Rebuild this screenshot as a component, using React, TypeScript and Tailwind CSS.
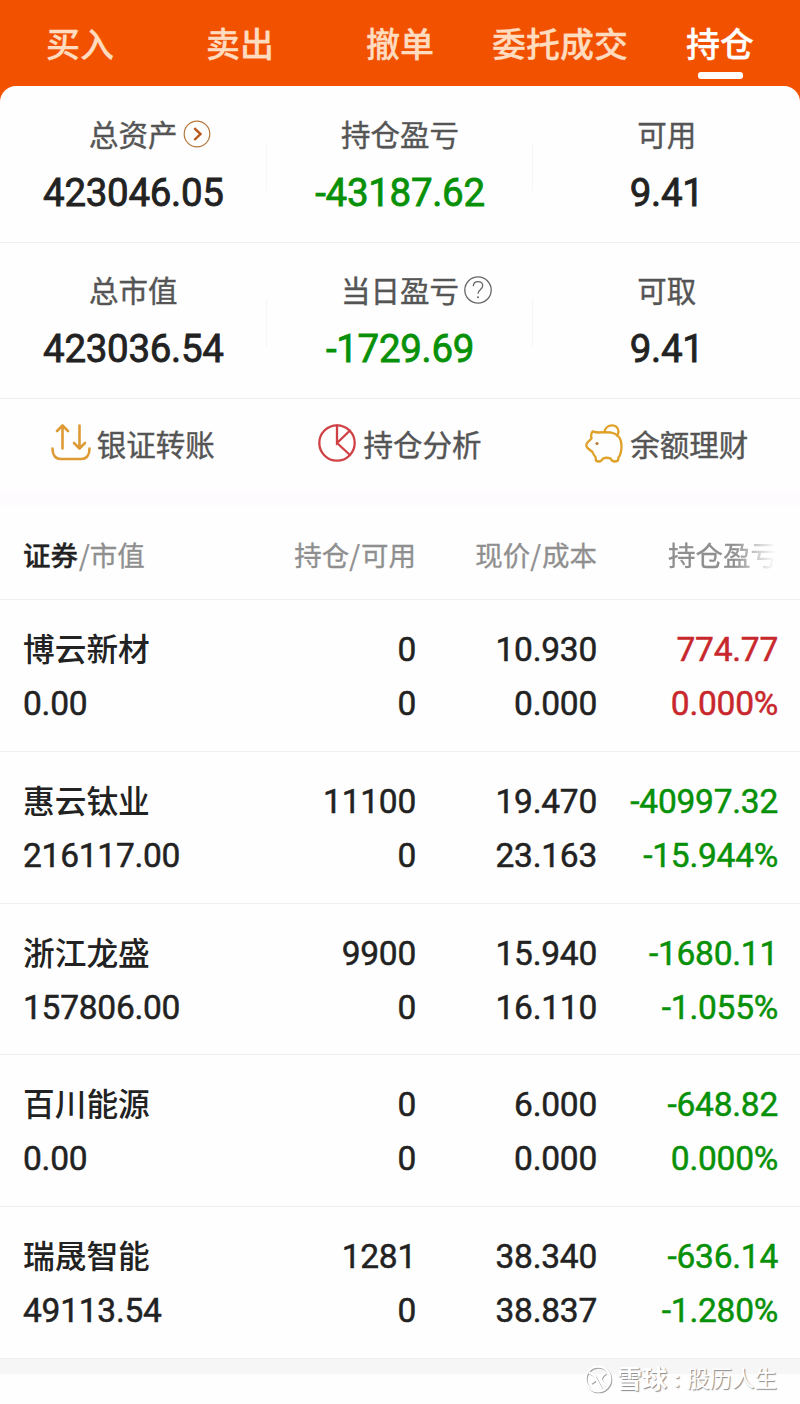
import React from 'react';
import clsx from 'clsx';

const tabs = [
  { label: '买入' },
  { label: '卖出' },
  { label: '撤单' },
  { label: '委托成交' },
  { label: '持仓', active: true },
];

const summary = [
  [
    { label: '总资产', value: '423046.05', icon: 'arrow' },
    { label: '持仓盈亏', value: '-43187.62', down: true },
    { label: '可用', value: '9.41' },
  ],
  [
    { label: '总市值', value: '423036.54' },
    { label: '当日盈亏', value: '-1729.69', down: true, icon: 'help' },
    { label: '可取', value: '9.41' },
  ],
];

const holdings = [
  { name: '博云新材', market: '0.00', held: '0', usable: '0', price: '10.930', cost: '0.000', profit: '774.77', rate: '0.000%', up: true },
  { name: '惠云钛业', market: '216117.00', held: '11100', usable: '0', price: '19.470', cost: '23.163', profit: '-40997.32', rate: '-15.944%' },
  { name: '浙江龙盛', market: '157806.00', held: '9900', usable: '0', price: '15.940', cost: '16.110', profit: '-1680.11', rate: '-1.055%' },
  { name: '百川能源', market: '0.00', held: '0', usable: '0', price: '6.000', cost: '0.000', profit: '-648.82', rate: '0.000%' },
  { name: '瑞晟智能', market: '49113.54', held: '1281', usable: '0', price: '38.340', cost: '38.837', profit: '-636.14', rate: '-1.280%' },
];

const ArrowIcon = () => (
  <svg width="28" height="28" viewBox="0 0 28 28" fill="none">
    <circle cx="14" cy="14" r="12.8" stroke="#b5793f" strokeWidth="1.2" />
    <path d="M11.3 8.2 17.5 14l-6.2 6" stroke="#b9561c" strokeWidth="2.4" />
  </svg>
);

const HelpIcon = () => (
  <svg width="28" height="28" viewBox="0 0 28 28" fill="none" stroke="#666" strokeWidth="1.3">
    <circle cx="14" cy="14" r="13.2" />
    <path d="M9.3 10.3c.1-2.9 2-4.6 4.7-4.6 2.8 0 4.7 1.7 4.7 4.1 0 3.6-4.7 3.8-4.7 8" />
    <circle cx="14" cy="21.2" r="1" fill="#666" stroke="none" />
  </svg>
);

const TransferIcon = () => (
  <svg width="40" height="40" viewBox="0 0 40 40" fill="none" stroke="#dd9a35" strokeWidth="2.6" strokeLinecap="round" strokeLinejoin="round">
    <path d="M11.500 25.500V2.500M6 8 11.500 2.500 17 8" />
    <path d="M28.500 2.500V25.500M23 20 28.500 25.500 34 20" />
    <path d="M1.500 25.500C1.500 32 4.500 36 9.500 36H30.500C35.500 36 38.500 32 38.500 25.500" />
  </svg>
);

const PieIcon = () => (
  <svg width="40" height="40" viewBox="0 0 40 40" fill="none" stroke="#d04145" strokeWidth="2.3" strokeLinecap="round">
    <circle cx="20" cy="20" r="17.700" />
    <path d="M20 2.500V20L33 7.500M20 20 33 32" />
  </svg>
);

const PiggyIcon = () => (
  <svg width="40" height="40" viewBox="0 0 40 40" fill="none" stroke="#dfa127" strokeWidth="2.300" strokeLinecap="round" strokeLinejoin="round">
    <path d="M8.500 8.500 13.500 9.500Q19 9 27 9.500C34 11 37.500 16 37.500 23 37.500 29 36.500 32 34.500 34.500L34 37.500Q30.500 39.500 28 37.500L26.500 35.500Q22.500 34 19 35.500L17.500 37.500Q14.500 39.500 12 37.500L11.500 34Q9.500 32 8.500 29L3.500 25Q1.500 22.500 3 20L7.500 15.500Q6.500 11 8.500 8.500Z" />
    <path d="M20.500 9C21.500 .500 34.500 0 34.500 8.500Q34.500 11 33 12.500" />
    <circle cx="13" cy="20.500" r="1.600" fill="#bb7b35" stroke="none" />
  </svg>
);

const SnowballLogo = () => (
  <svg className="mr-[3px]" width="30" height="30" viewBox="0 0 30 30" fill="none">
    <g stroke="#a0a0a0" strokeWidth="2.2" transform="translate(.9 .9)">
      <circle cx="14" cy="14" r="12.3" />
      <path d="M5 7.500Q11 10 12 14 10 16 7 18M21.500 8Q18 10 16.500 14 18 18 23 21M12 14 18 25" />
    </g>
    <g stroke="#fff" strokeWidth="2.2">
      <circle cx="14" cy="14" r="12.3" />
      <path d="M5 7.500Q11 10 12 14 10 16 7 18M21.500 8Q18 10 16.500 14 18 18 23 21M12 14 18 25" />
    </g>
  </svg>
);

const actions = [
  { label: '银证转账', icon: <TransferIcon /> },
  { label: '持仓分析', icon: <PieIcon /> },
  { label: '余额理财', icon: <PiggyIcon /> },
];

const App = () => {
  return (
    <div className="w-[800px] h-[1404px] overflow-hidden bg-[#fefefe] font-['Roboto','Noto_Sans_CJK_SC',sans-serif] text-[#222]">
      {/* Trade tabs */}
      <div className="bg-[#f25200]">
        <div className="grid h-[86px] grid-cols-5">
          {tabs.map((tab) => (
            <div key={tab.label} className="flex flex-col items-center pt-[22px]">
              <span
                className={clsx(
                  'text-[34px] leading-[46px] font-medium whitespace-nowrap [-webkit-text-stroke:0.3px]',
                  tab.active ? 'text-white' : 'text-[#ffdcc0]'
                )}
              >
                {tab.label}
              </span>
              {tab.active && <span className="mt-1 h-[7px] w-[45px] rounded-[3px] bg-white" />}
            </div>
          ))}
        </div>
        <div className="h-4 rounded-t-2xl bg-[#fefefe]" />
      </div>

      {/* Account summary */}
      <div className="-mt-4">
        {summary.map((row, index) => (
          <div key={index} className={clsx('grid grid-cols-3 border-b border-[#efefef]', index === 0 ? 'h-[157px] pt-[29px]' : 'h-[156px] pt-7')}>
            {row.map((item, col) => (
              <div key={item.label} className="relative flex flex-col items-center">
                <div className="relative text-[29.5px] leading-[42px] text-[#555] whitespace-nowrap [-webkit-text-stroke:0.4px]">
                  {item.label}
                  {item.icon && (
                    <span className="absolute left-full top-[5px] ml-[5px]">
                      {item.icon === 'arrow' ? <ArrowIcon /> : <HelpIcon />}
                    </span>
                  )}
                </div>
                <div
                  className={clsx(
                    'mt-3 text-[38.5px] leading-[48px] tracking-[-0.3px] [-webkit-text-stroke:0.8px]',
                    item.down && 'text-[#089108]'
                  )}
                >
                  {item.value}
                </div>
                {col < 2 && <span className="absolute right-0 top-7 h-12 w-px bg-[#f6f6f6]" />}
              </div>
            ))}
          </div>
        ))}
      </div>

      {/* Shortcuts */}
      <div className="grid h-[93px] grid-cols-3">
        {actions.map((action) => (
          <div key={action.label} className="flex h-[88px] items-center justify-center gap-[6px] pr-[1px]">
            {action.icon}
            <span className="pt-[5px] text-[29.5px] leading-[40px] text-[#555] [-webkit-text-stroke:0.4px]">{action.label}</span>
          </div>
        ))}
      </div>
      <div className="h-[13px] bg-[#fdfbfd]" />

      {/* Holdings table */}
      <div className="grid h-[95px] grid-cols-[200px_193px_181px_181px] items-center border-b border-[#efefef] pl-[23px] pt-[6px] font-['Noto_Sans_CJK_SC',sans-serif] text-[27.5px] text-[#8f8f8f] [-webkit-text-stroke:0.3px]">
        <div>
          <span className="font-medium text-[#222]">证券</span>
          <span className="pl-px">/</span>市值
        </div>
        <div className="text-right">持仓<span className="pr-px">/</span>可用</div>
        <div className="text-right">现价<span className="pr-px">/</span>成本</div>
        {/* Clipped column title fades out at the screen edge */}
        <div className="text-right">
          <span className="mask-linear-[90deg] inline-block [mask-image:linear-gradient(to_right,#000_60%,transparent_98%)]">持仓盈亏</span>
        </div>
      </div>
      {holdings.map((item) => (
        <div
          key={item.name}
          className="grid h-[151.8px] grid-cols-[200px_193px_181px_181px] border-b border-[#efefef] pl-[23px] pt-[23px] text-right text-[33.5px] leading-[54px] tracking-[-0.25px] [-webkit-text-stroke:0.5px]"
        >
          <div className="text-left">
            <div className="h-[54px] pt-px text-[31.7px] font-medium tracking-normal [-webkit-text-stroke:0]">{item.name}</div>
            <div>{item.market}</div>
          </div>
          <div>
            <div>{item.held}</div>
            <div>{item.usable}</div>
          </div>
          <div>
            <div>{item.price}</div>
            <div>{item.cost}</div>
          </div>
          <div className={item.up ? 'text-[#c8282d]' : 'text-[#089108]'}>
            <div>{item.profit}</div>
            <div>{item.rate}</div>
          </div>
        </div>
      ))}

      {/* Footer with community signature */}
      <div className="h-[15px] bg-[#f6f6f6]" />
      <div className="-mt-[10px] flex h-8 items-center justify-end pr-[23px] text-[22.5px] text-white [text-shadow:1px_1px_1px_#888]">
        <SnowballLogo />
        <span className="text-[25px] font-bold">雪球</span>
        <span className="w-5 text-center font-bold">:</span>
        <span>股历人生</span>
      </div>
    </div>
  );
};

export default App;
